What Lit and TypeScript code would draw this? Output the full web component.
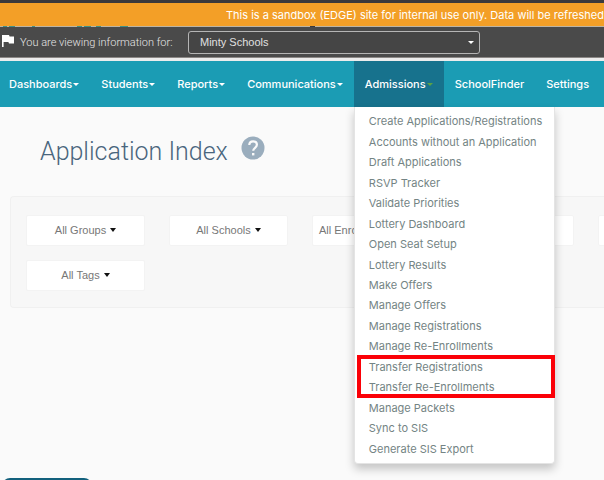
import { LitElement, html, css, svg } from "lit";
import { customElement } from "lit/decorators.js";
import { classMap } from "lit/directives/class-map.js";

interface NavItem {
  label: string;
  menu: boolean;
  open?: boolean;
}

const NAV: NavItem[] = [
  { label: "Dashboards", menu: true },
  { label: "Students", menu: true },
  { label: "Reports", menu: true },
  { label: "Communications", menu: true },
  { label: "Admissions", menu: true, open: true },
  { label: "SchoolFinder", menu: false },
  { label: "Settings", menu: false },
];

const ADMISSIONS = [
  "Create Applications/Registrations",
  "Accounts without an Application",
  "Draft Applications",
  "RSVP Tracker",
  "Validate Priorities",
  "Lottery Dashboard",
  "Open Seat Setup",
  "Lottery Results",
  "Make Offers",
  "Manage Offers",
  "Manage Registrations",
  "Manage Re-Enrollments",
  "Transfer Registrations",
  "Transfer Re-Enrollments",
  "Manage Packets",
  "Sync to SIS",
  "Generate SIS Export",
];

const FILTERS = [
  { label: "All Groups" },
  { label: "All Schools" },
  { label: "All Enro", cut: true },
  { label: "" },
  { label: "" },
  { label: "All Tags" },
];

const FRAGMENTS = [
  [3, 4], [9, 6], [32, 3], [77, 5], [84, 7], [96, 5], [120, 8],
];

@customElement("app-menu")
export class AppMenu extends LitElement {
  static styles = css`
    :host {
      display: block;
      position: absolute;
      top: 100%;
      left: 0;
      z-index: 5;
      width: 201px;
      box-sizing: border-box;
      padding: 4px 0;
      background: #fff;
      border: 1px solid #e4e4e4;
      border-top: 0;
      border-radius: 0 0 4px 4px;
      box-shadow: 0 5px 10px rgba(0, 0, 0, 0.22);
    }
    ul {
      list-style: none;
      margin: 0;
      padding: 0;
      display: grid;
      grid-auto-rows: 1fr;
      height: 348px;
    }
    li {
      display: flex;
      align-items: center;
    }
    a {
      padding-left: 14px;
      font-size: 11px;
      line-height: 16px;
      color: #748484;
      text-decoration: none;
      white-space: nowrap;
    }
    .marked {
      position: relative;
    }
    .marked::after {
      content: "";
      position: absolute;
      inset: -2px -1px -100% 2px;
      border: 4px solid #fb0007;
      pointer-events: none;
    }
  `;

  render() {
    return html`<ul>
      ${ADMISSIONS.map(
        (t) => html`<li class=${classMap({ marked: t === "Transfer Registrations" })}>
          <a href="#">${t}</a>
        </li>`
      )}
    </ul>`;
  }
}

@customElement("app-root")
export class AppRoot extends LitElement {
  static styles = css`
    :host {
      display: block;
      min-height: 100vh;
      position: relative;
      overflow: hidden;
      background: #fafafa;
      font-family: "Liberation Sans", Arial, sans-serif;
      font-size: 11px;
    }
    button,
    select {
      font: inherit;
      margin: 0;
    }
    .banner {
      border-top: 3px solid #3b393b;
      background: #f39f27;
      color: #fff;
      height: 23px;
      line-height: 24px;
      text-align: right;
      white-space: nowrap;
      font-family: Inter, "Liberation Sans", sans-serif;
    }
    .seam {
      display: block;
      width: 100%;
      height: 1px;
      background: #bfb5a2;
    }
    .viewing {
      display: flex;
      align-items: center;
      height: 30px;
      background: #4a4a4a;
      border-bottom: 1px solid #8c8886;
      color: #e6e6e6;
    }
    .flag {
      width: 12px;
      height: 12px;
      margin: 0 6px 2px 2px;
      fill: #fff;
    }
    .viewing label {
      width: 168px;
      font-family: Roboto, "Liberation Sans", sans-serif;
      font-weight: 300;
    }
    .picker {
      display: flex;
      align-items: center;
      position: relative;
    }
    select {
      appearance: none;
      width: 292px;
      height: 23px;
      padding: 0 11px;
      background: #454545;
      border: 1px solid #b5b5b5;
      border-radius: 3px;
      color: #e0e0e0;
    }
    .caret {
      display: inline-block;
      border: 3px solid transparent;
      border-top-color: currentColor;
      border-bottom: 0;
    }
    .picker .caret {
      position: absolute;
      right: 6px;
      color: #fff;
    }
    nav {
      display: flex;
      height: 46px;
      border-top: 3px solid #ececec;
      background: #1b9cb4;
      font-family: Inter, "Liberation Sans", sans-serif;
    }
    .item {
      position: relative;
      display: flex;
    }
    .item > button,
    .item > a {
      display: flex;
      align-items: center;
      gap: 1px;
      padding: 0 11px;
      border: 0;
      background: none;
      color: #fff;
      font-weight: 500;
      text-decoration: none;
    }
    .item:first-child > button {
      padding-left: 9px;
    }
    .open > button {
      background: #17728d;
    }
    .open .caret {
      color: #5ba245;
    }
    header {
      display: flex;
      gap: 13px;
      padding: 29px 0 0 40px;
    }
    h1 {
      margin: 0;
      font-family: Roboto, "Liberation Sans", sans-serif;
      font-size: 25px;
      line-height: 32px;
      font-weight: 300;
      color: #49657d;
    }
    .help {
      width: 24px;
      height: 24px;
      padding: 0;
      border: 0;
      background: none;
    }
    .help svg {
      display: block;
    }
    .panel {
      display: grid;
      grid-template-columns: repeat(5, 119px);
      gap: 14px 24px;
      margin: 28px 0 0 10px;
      padding: 18px 15px 16px;
      overflow: hidden;
      border: 1px solid #f0f0f0;
      border-right: 0;
      border-radius: 4px 0 0 4px;
      background: #f7f7f7;
    }
    .filter {
      display: flex;
      align-items: center;
      justify-content: center;
      gap: 4px;
      height: 31px;
      padding: 0 0 2px;
      border: 1px solid #f3f3f3;
      border-radius: 2px;
      background: #fff;
      color: #777;
      white-space: nowrap;
    }
    .filter .caret {
      border-width: 4px 3px 0;
      color: #111;
    }
    .cut {
      justify-content: flex-start;
      padding-left: 6px;
    }
    .last {
      grid-row: 2;
    }
    .dock {
      position: absolute;
      left: 2px;
      bottom: -30px;
      width: 90px;
      height: 32px;
      border: 0;
      border-radius: 8px;
      background: #12607c;
    }
  `;

  private caret = html`<span class="caret"></span>`;

  render() {
    return html`
      <div class="banner">This is a sandbox (EDGE) site for internal use only. Data will be refreshed</div>
      <svg class="seam" aria-hidden="true">
        ${FRAGMENTS.map(([x, w]) => svg`<rect x=${x} width=${w} height="1" fill="#3f8f84" />`)}
        <rect x="310" width="5" height="1" fill="#3b393b" />
      </svg>
      <div class="viewing">
        <svg class="flag" viewBox="0 0 12 12" aria-hidden="true">
          <path d="M0 0h7l.6 1.5H12V8.500H7L6.400 7H1.600v5H0z" />
        </svg>
        <label for="org">You are viewing information for:</label>
        <div class="picker">
          <select id="org"><option>Minty Schools</option></select>
          ${this.caret}
        </div>
      </div>
      <nav>
        ${NAV.map(
          (n) => html`<div class=${classMap({ item: true, open: !!n.open })}>
            ${n.menu
              ? html`<button>${n.label}${this.caret}</button>`
              : html`<a href="#">${n.label}</a>`}
            ${n.open ? html`<app-menu></app-menu>` : null}
          </div>`
        )}
      </nav>
      <header>
        <h1>Application Index</h1>
        <button class="help" aria-label="Help">
          <svg width="24" height="24" viewBox="0 0 24 24">
            <circle cx="12" cy="12" r="11.500" fill="#9aadbd" />
            <path d="M8.300 9c0-2.200 1.600-3.700 3.800-3.700s3.800 1.400 3.800 3.500c0 3-3.700 3-3.700 6" fill="none" stroke="#fafafa" stroke-width="2.200" />
            <rect x="11" y="17" width="2.400" height="2.400" fill="#fafafa" />
          </svg>
        </button>
      </header>
      <section class="panel">
        ${FILTERS.map(
          (f, i) => html`<button class=${classMap({ filter: true, cut: !!f.cut, last: i === 5 })}>
            ${f.label}${f.label && !f.cut ? this.caret : null}
          </button>`
        )}
      </section>
      <button class="dock" aria-label="Support"></button>
    `;
  }
}
